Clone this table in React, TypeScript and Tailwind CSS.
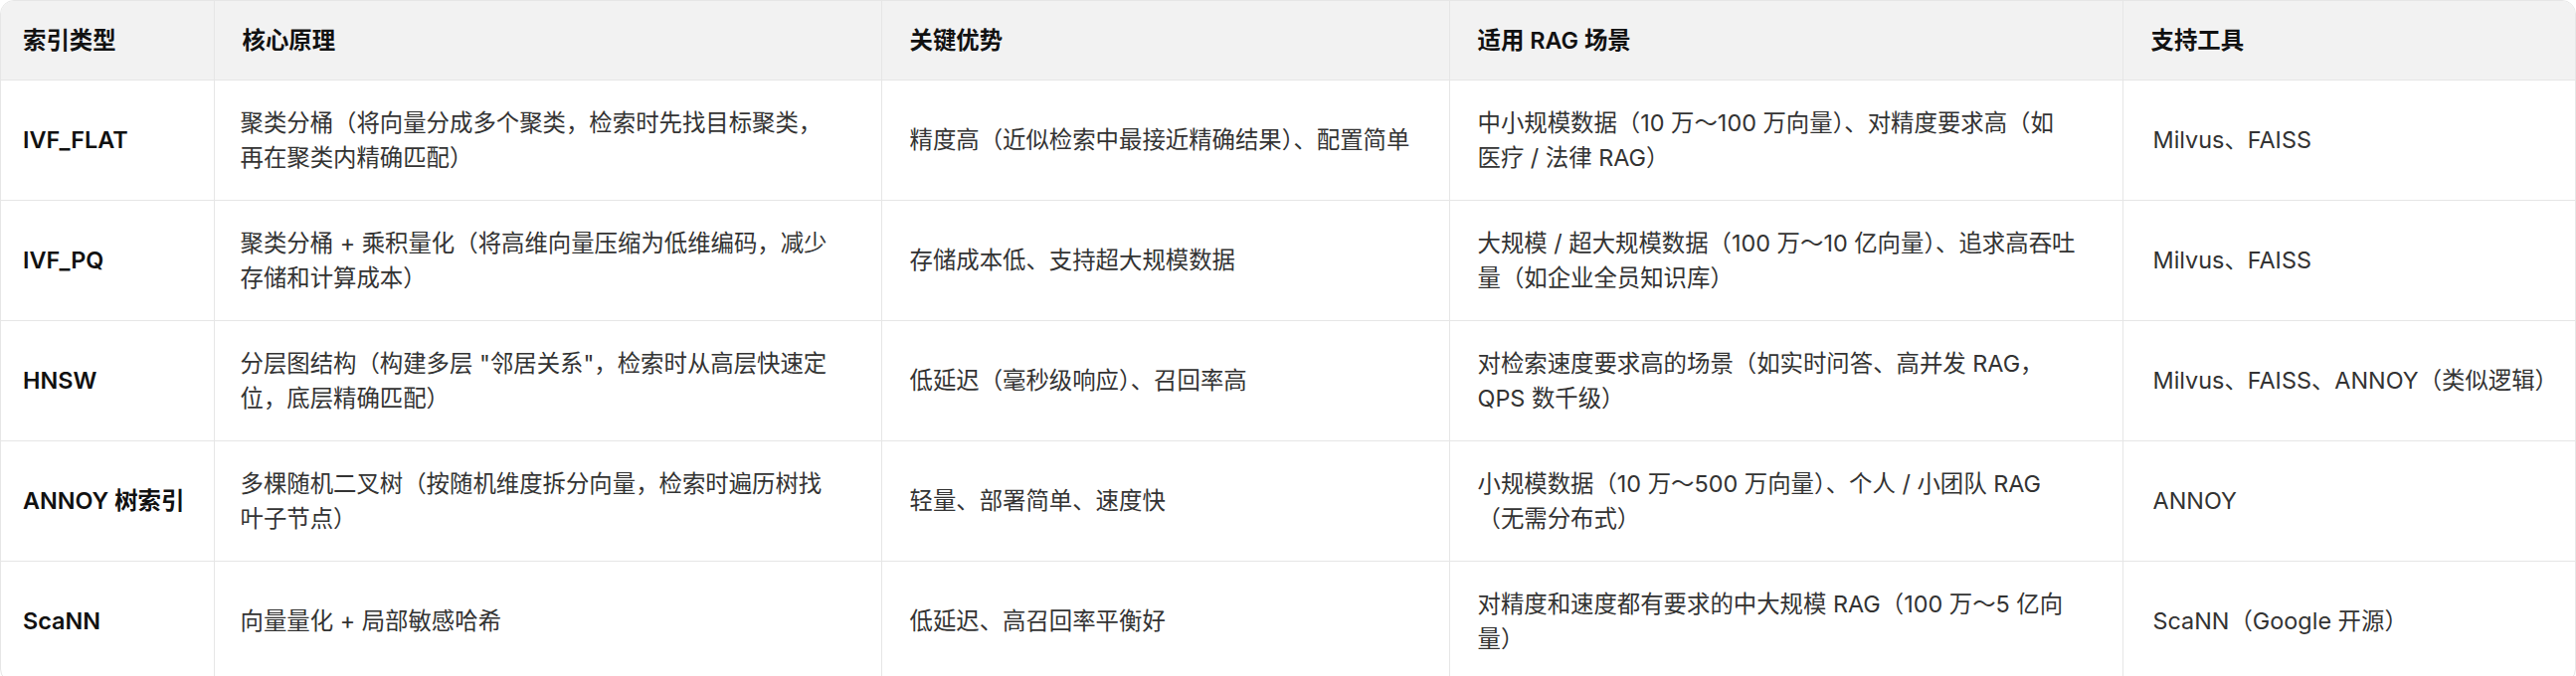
import React from 'react';

type Row = {
  name: string;
  principle: string;
  advantage: string;
  scene: string | string[];
  tools: string;
};

const rows: Row[] = [
  {
    name: 'IVF_FLAT',
    principle: '聚类分桶（将向量分成多个聚类，检索时先找目标聚类，再在聚类内精确匹配）',
    advantage: '精度高（近似检索中最接近精确结果）、配置简单',
    scene: '中小规模数据（10 万～100 万向量）、对精度要求高（如医疗 / 法律 RAG）',
    tools: 'Milvus、FAISS',
  },
  {
    name: 'IVF_PQ',
    principle: '聚类分桶 + 乘积量化（将高维向量压缩为低维编码，减少存储和计算成本）',
    advantage: '存储成本低、支持超大规模数据',
    // the reference breaks this one a character later than the browser does
    scene: ['大规模 / 超大规模数据（100 万～10 亿向量）、追求高吞吐', '量（如企业全员知识库）'],
    tools: 'Milvus、FAISS',
  },
  {
    name: 'HNSW',
    principle: '分层图结构（构建多层 "邻居关系"，检索时从高层快速定位，底层精确匹配）',
    advantage: '低延迟（毫秒级响应）、召回率高',
    scene: '对检索速度要求高的场景（如实时问答、高并发 RAG，QPS 数千级）',
    tools: 'Milvus、FAISS、ANNOY（类似逻辑）',
  },
  {
    name: 'ANNOY 树索引',
    principle: '多棵随机二叉树（按随机维度拆分向量，检索时遍历树找叶子节点）',
    advantage: '轻量、部署简单、速度快',
    scene: '小规模数据（10 万～500 万向量）、个人 / 小团队 RAG（无需分布式）',
    tools: 'ANNOY',
  },
  {
    name: 'ScaNN',
    principle: '向量量化 + 局部敏感哈希',
    advantage: '低延迟、高召回率平衡好',
    scene: '对精度和速度都有要求的中大规模 RAG（100 万～5 亿向量）',
    tools: 'ScaNN（Google 开源）',
  },
];

const headers = ['索引类型', '核心原理', '关键优势', '适用 RAG 场景', '支持工具'];

export default function App() {
  return (
    <div
      className="w-[2590px] bg-white"
      style={{ fontFamily: 'Inter, "Noto Sans CJK SC", sans-serif' }}
    >
      <div className="overflow-hidden rounded-[14px] border border-[#e6e6e6]">
        <table className="w-full table-fixed border-collapse text-[23.4px] leading-[35px]">
          <colgroup>
            <col className="w-[214px]" />
            <col className="w-[671px]" />
            <col className="w-[571px]" />
            <col className="w-[677px]" />
            <col />
          </colgroup>
          <thead>
            <tr className="h-[79px] bg-[#f2f2f2]">
              {headers.map((h, i) => (
                <th
                  key={h}
                  className={`text-left align-middle font-semibold text-[#111] border-b border-[#e6e6e6] ${
                    i < 4 ? 'border-r' : ''
                  } ${i === 0 ? 'pl-[22px] pr-[20px]' : 'px-[28px]'}`}
                >
                  {h}
                </th>
              ))}
            </tr>
          </thead>
          <tbody>
            {rows.map((r) => (
              <tr key={r.name} className="h-[121px]">
                <td className="border-b border-r border-[#e6e6e6] pl-[22px] pr-[20px] align-middle font-semibold text-[#111]">
                  {r.name}
                </td>
                <td className="border-b border-r border-[#e6e6e6] pl-[26px] pr-[47px] align-middle text-[#333]">
                  {r.principle}
                </td>
                <td className="border-b border-r border-[#e6e6e6] px-[28px] align-middle text-[#333]">
                  {r.advantage}
                </td>
                <td className="border-b border-r border-[#e6e6e6] pl-[28px] pr-[54px] align-middle text-[#333]">
                  {Array.isArray(r.scene)
                    ? r.scene.map((line) => (
                        <span key={line} className="block whitespace-nowrap">
                          {line}
                        </span>
                      ))
                    : r.scene}
                </td>
                <td className="border-b border-[#e6e6e6] pl-[30px] pr-[6px] align-middle text-[#333]">
                  {r.tools}
                </td>
              </tr>
            ))}
          </tbody>
        </table>
      </div>
    </div>
  );
}
